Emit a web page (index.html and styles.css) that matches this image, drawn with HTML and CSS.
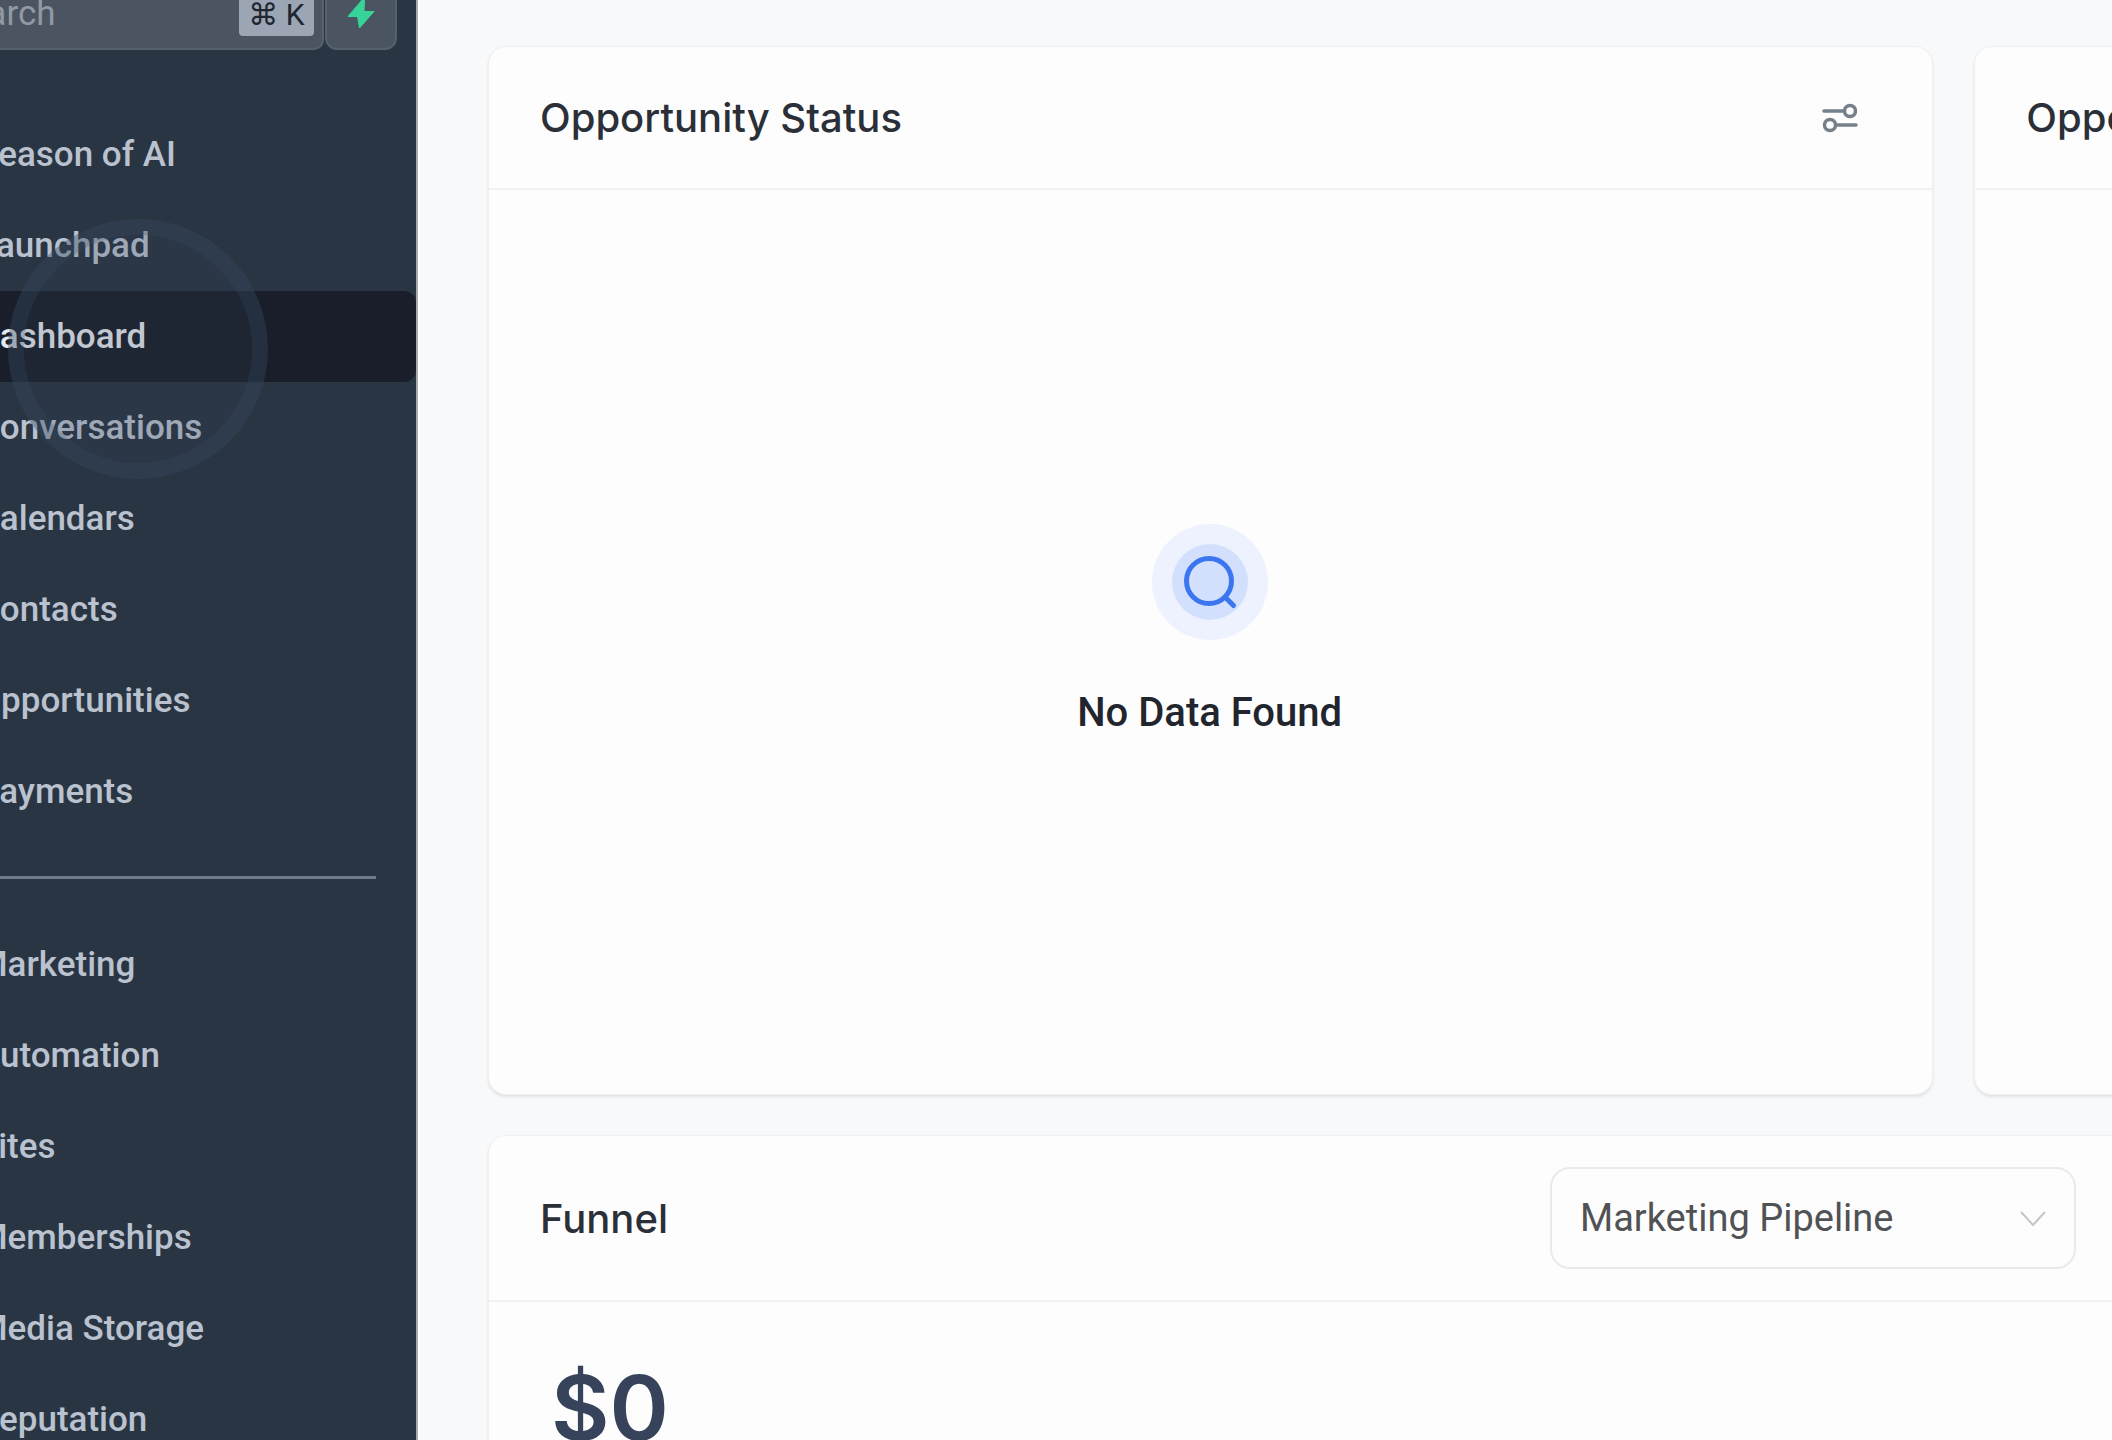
FILE: index.html
```html
<!DOCTYPE html>
<html lang="en">
<head>
<meta charset="utf-8">
<title>Dashboard</title>
<link rel="stylesheet" href="styles.css">
</head>
<body>
<div class="app">
  <aside class="sidebar">
    <div class="tools">
      <label class="search">
        <input class="search-input" type="text" placeholder="Search" aria-label="Search">
        <kbd class="shortcut">⌘ K</kbd>
      </label>
      <button class="bolt" type="button" aria-label="Quick actions">
        <svg width="28" height="30" viewBox="0 0 28 30"><path d="M15 1 1 17.500h9.500L12.500 29 27 12.500h-10L17.500 1z" fill="#37d399" stroke="#37d399" stroke-linejoin="round"/></svg>
      </button>
    </div>
    <nav class="nav">
      <a class="nav-item" href="#">Season of AI</a>
      <a class="nav-item" href="#">Launchpad</a>
      <a class="nav-item active" href="#">Dashboard</a>
      <a class="nav-item" href="#">Conversations</a>
      <a class="nav-item" href="#">Calendars</a>
      <a class="nav-item" href="#">Contacts</a>
      <a class="nav-item" href="#">Opportunities</a>
      <a class="nav-item" href="#">Payments</a>
      <hr class="divider">
      <a class="nav-item" href="#">Marketing</a>
      <a class="nav-item" href="#">Automation</a>
      <a class="nav-item" href="#">Sites</a>
      <a class="nav-item" href="#">Memberships</a>
      <a class="nav-item" href="#">Media Storage</a>
      <a class="nav-item" href="#">Reputation</a>
    </nav>
  </aside>
  <main class="main">
    <div class="cards">
      <section class="card">
        <header class="card-header">
          <h2 class="card-title">Opportunity Status</h2>
          <button class="settings" type="button" aria-label="Card settings">
            <svg width="36" height="30" viewBox="0 0 36 30" fill="none" stroke="#76808a" stroke-width="3.500" stroke-linecap="round"><path d="M2 8h19M15 22h19"/><circle cx="28" cy="8" r="5.500"/><circle cx="8" cy="22" r="5.500"/></svg>
          </button>
        </header>
        <div class="empty">
          <svg width="118" height="118" viewBox="0 0 118 118" fill="none"><circle cx="59" cy="59" r="58" fill="#edf2fe"/><circle cx="59" cy="59" r="38" fill="#d3e0fd"/><circle cx="58" cy="58" r="22.500" stroke="#3b76f0" stroke-width="5"/><path d="m74 74 8.500 8.500" stroke="#3b76f0" stroke-width="5" stroke-linecap="round"/></svg>
          <p class="empty-text">No Data Found</p>
        </div>
      </section>
      <section class="card">
        <header class="card-header">
          <h2 class="card-title">Opportunity Value</h2>
        </header>
      </section>
    </div>
    <section class="card funnel">
      <header class="card-header funnel-header">
        <h2 class="card-title">Funnel</h2>
        <div class="picker">
          <select class="picker-select" aria-label="Pipeline"><option>Marketing Pipeline</option></select>
          <svg class="picker-arrow" width="28" height="18" viewBox="0 0 28 18" fill="none" stroke="#c3c6ca" stroke-width="2"><path d="m2 2 12 13L26 2"/></svg>
        </div>
      </header>
      <p class="amount">$0</p>
    </section>
  </main>
  <div class="click-ring"></div>
</div>
</body>
</html>
```
FILE: styles.css
```css
* {
  box-sizing: border-box;
}

body {
  margin: 0;
  background: #f8f9fb;
  font-family: Roboto, sans-serif;
}

.app {
  display: flex;
  position: relative;
  height: 100vh;
  overflow: hidden;
}

.sidebar {
  flex: none;
  width: 540px;
  margin: -24px 0 0 -120px;
  background: #2a3543;
  border-right: 2px solid #fff;
  box-shadow: inset -2px 0 #a6abb3;
}

.tools {
  display: flex;
  gap: 1px;
  padding: 0 21px 0 24px;
}

.search {
  display: flex;
  flex: 1;
  align-items: center;
  min-width: 0;
  height: 74px;
  padding: 0 8px 0 42px;
  background: #4b5561;
  border: 2px solid #56616d;
  border-radius: 10px;
}

.search-input {
  flex: 1;
  min-width: 0;
  padding: 0;
  border: 0;
  background: none;
  font: 35px Roboto, sans-serif;
  color: #fff;
}

.search-input::placeholder {
  color: #9099a4;
}

.shortcut {
  flex: none;
  width: 75px;
  height: 46px;
  border-radius: 4px;
  background: #9ca5b3;
  font: 30px/50px Roboto, "DejaVu Sans", sans-serif;
  color: #20262f;
  text-align: center;
  white-space: nowrap;
}

.bolt {
  display: grid;
  flex: none;
  place-items: center;
  width: 72px;
  padding: 2px 0 0;
  background: #4b5561;
  border: 2px solid #56616d;
  border-radius: 12px;
}

.nav {
  display: flex;
  flex-direction: column;
  padding-top: 59px;
}

.nav-item {
  height: 91px;
  margin-right: 2px;
  padding-left: 97px;
  font-size: 35px;
  font-weight: 500;
  line-height: 91px;
  color: #b9c2ce;
  text-decoration: none;
}

.active {
  background: #191e2a;
  border-radius: 0 12px 12px 0;
  color: #e6e9ee;
}

.divider {
  width: 456px;
  height: 3px;
  margin: 39px 0 40px 40px;
  border: 0;
  background: #707b89;
}

.main {
  flex: 1;
  min-width: 0;
  padding: 46px 0 0 68px;
}

.cards {
  display: grid;
  grid-template-columns: repeat(2, 89%);
  gap: 41px;
  margin-bottom: 40px;
}

.card {
  min-height: 1049px;
  background: #fdfdfd;
  border: 1px solid #f0f0f2;
  border-radius: 18px;
  box-shadow: 0 2px 3px #00000018;
}

.card-header {
  display: flex;
  align-items: center;
  justify-content: space-between;
  height: 143px;
  padding: 0 74px 0 51px;
  border-bottom: 2px solid #f1f1f3;
}

.card-title {
  margin: 0;
  font: 500 40px Inter, sans-serif;
  color: #2b2f38;
}

.settings {
  display: flex;
  padding: 0;
  border: 0;
  background: none;
}

.empty {
  display: flex;
  flex-direction: column;
  align-items: center;
  gap: 48px;
  padding: 333px 2px 0 0;
}

.empty-text {
  margin: 0;
  font-size: 40px;
  font-weight: 500;
  line-height: 48px;
  color: #22252e;
}

.funnel {
  margin-right: -120px;
}

.funnel-header {
  height: 166px;
  padding-right: 155px;
}

.picker {
  position: relative;
  width: 526px;
}

.picker-select {
  width: 100%;
  height: 102px;
  padding: 0 28px;
  appearance: none;
  background: #fdfdfd;
  border: 2px solid #e9eaec;
  border-radius: 20px;
  font: 38px Roboto, sans-serif;
  color: #505254;
}

.picker-arrow {
  position: absolute;
  top: 43px;
  right: 29px;
  pointer-events: none;
}

.amount {
  margin: 0;
  padding: 58px 0 0 62px;
  font: 600 90px/96px Inter, sans-serif;
  color: #36435a;
}

.click-ring {
  position: absolute;
  top: 219px;
  left: 8px;
  width: 260px;
  height: 260px;
  border: 16px solid #34495f66;
  border-radius: 50%;
  background: #34425a33;
  background-clip: padding-box;
  pointer-events: none;
}
```
